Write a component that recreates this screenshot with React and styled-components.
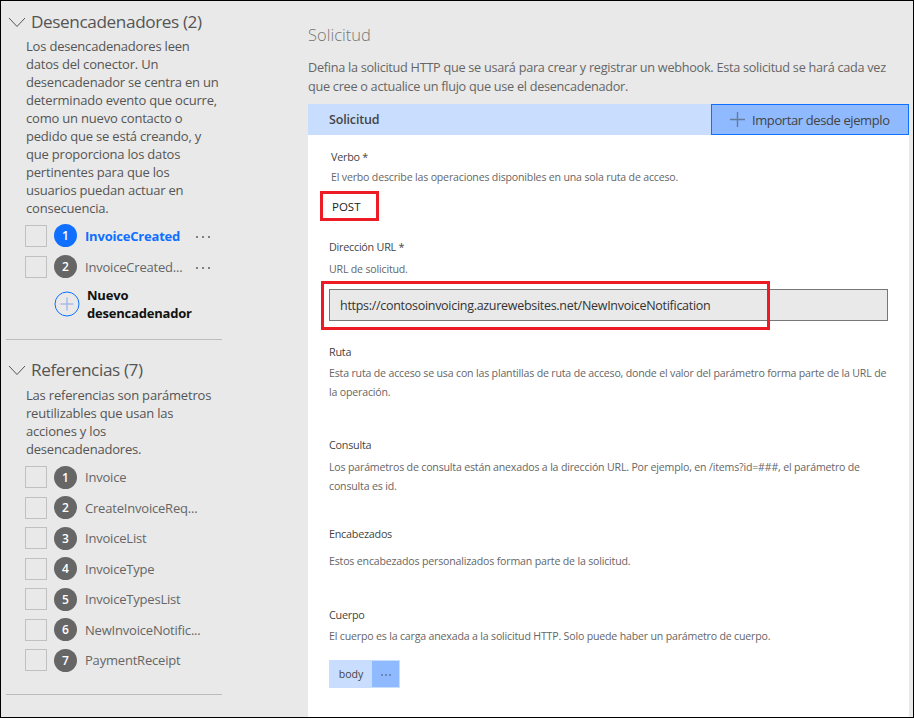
import React from 'react'
import styled, { createGlobalStyle } from 'styled-components'

const GlobalStyle = createGlobalStyle`
    html, body {
        margin: 0;
        padding: 0;
        background: #ffffff;
    }
    * {
        box-sizing: border-box;
    }
`

const Frame = styled.div`
    width: 914px;
    height: 718px;
    display: flex;
    overflow: hidden;
    background: #e9e9e9;
    border: 1px solid #000000;
    font-family: "Open Sans", "Noto Sans", sans-serif;
`

const Sidebar = styled.aside`
    width: 307px;
    flex: none;
    padding: 9px 0 0 5px;
`

const Section = styled.section`
    width: 216px;
    padding-bottom: ${({ $bottom }) => $bottom}px;
    margin-bottom: ${({ $after }) => $after}px;
    border-bottom: 1px solid #bdbdbd;
`

const SectionHead = styled.div`
    display: flex;
    align-items: center;
    gap: 5px;
    height: 24px;
    padding-left: 2px;
`

const SectionTitle = styled.h2`
    margin: 0;
    font-size: 17.2px;
    font-weight: 400;
    line-height: 24px;
    letter-spacing: -0.4px;
    color: #555555;
    white-space: nowrap;
`

const SectionText = styled.p`
    margin: ${({ $top }) => $top}px 0 ${({ $end }) => $end}px 20px;
    width: 195px;
    font-size: 13px;
    line-height: 18px;
    letter-spacing: -0.2px;
    color: #555555;
`

const Row = styled.div`
    display: flex;
    align-items: center;
    height: ${({ $height }) => $height}px;
    padding-left: 19px;
`

const Check = styled.span`
    width: 22px;
    height: 22px;
    flex: none;
    border: 1px solid #c0c0c0;
`

const Badge = styled.span`
    width: 23px;
    height: 23px;
    flex: none;
    margin-left: 7px;
    border-radius: 50%;
    display: flex;
    align-items: center;
    justify-content: center;
    background: ${({ $active }) => ($active ? '#0f6fff' : '#666666')};
    color: #ffffff;
    font-size: 12px;
    font-weight: 600;
`

const RowLabel = styled.span`
    width: 111px;
    flex: none;
    margin-left: 8px;
    font-size: 13px;
    font-weight: ${({ $active }) => ($active ? 700 : 400)};
    letter-spacing: -0.2px;
    color: ${({ $active }) => ($active ? '#0f6fff' : '#666666')};
    white-space: nowrap;
`

const Dots = styled.span`
    display: flex;
    gap: ${({ $gap }) => $gap}px;
    margin-top: 2px;
    i {
        width: 2px;
        height: 2px;
        background: ${({ $color }) => $color};
    }
`

const NewRow = styled.div`
    display: flex;
    align-items: center;
    margin-top: 4px;
    padding-left: 48px;
    gap: 7px;
`

const NewLabel = styled.span`
    font-size: 13px;
    font-weight: 700;
    line-height: 18px;
    letter-spacing: -0.2px;
    color: #111111;
    width: 120px;
`

const Main = styled.main`
    flex: 1;
    min-width: 0;
    display: flex;
    flex-direction: column;
    padding-right: 4px;
`

const PageTitle = styled.h1`
    margin: 22px 0 0 0;
    font-size: 16.5px;
    font-weight: 300;
    line-height: 24px;
    color: #777777;
`

const PageText = styled.p`
    margin: 11px 0 0 0;
    font-size: 12.7px;
    line-height: 19px;
    letter-spacing: -0.28px;
    color: #666666;
    width: 590px;
`

const Panel = styled.div`
    margin-top: 8px;
    flex: 1;
    background: #ffffff;
    display: flex;
    flex-direction: column;
`

const PanelHead = styled.div`
    height: 31px;
    flex: none;
    display: flex;
    align-items: center;
    justify-content: space-between;
    padding-left: 21px;
    background: #c9deff;
`

const PanelTitle = styled.span`
    font-size: 12.5px;
    font-weight: 600;
    letter-spacing: -0.15px;
    color: #444444;
`

const ImportButton = styled.button`
    width: 198px;
    height: 31px;
    display: flex;
    align-items: center;
    gap: 7px;
    padding: 0 0 0 18px;
    background: #8fbaff;
    border: 1px solid #0f6fff;
    font-family: inherit;
    font-size: 13px;
    font-weight: 500;
    letter-spacing: -0.4px;
    color: #444444;
    white-space: nowrap;
`

const PanelBody = styled.div`
    padding: 0 21px;
    display: flex;
    flex-direction: column;
`

const Field = styled.div`
    margin-top: ${({ $top }) => $top}px;
    padding-left: ${({ $indent }) => $indent || 0}px;
`

const Label = styled.div`
    font-size: 10.8px;
    line-height: 18px;
    letter-spacing: -0.25px;
    color: #444444;
`

const Hint = styled.div`
    margin-top: ${({ $gap }) => $gap}px;
    font-size: 10.6px;
    line-height: 18.5px;
    letter-spacing: -0.18px;
    color: #666666;
`

const Annotated = styled.div`
    position: relative;
    display: flow-root;
`

const RedBox = styled.span`
    position: absolute;
    left: ${({ $left }) => $left}px;
    top: ${({ $top }) => $top}px;
    width: ${({ $width }) => $width}px;
    height: ${({ $height }) => $height}px;
    border: 3px solid #ed1c24;
    pointer-events: none;
`

const VerbValue = styled.div`
    margin-top: 11px;
    padding-left: 1px;
    font-size: 11.5px;
    line-height: 18px;
    font-weight: 500;
    color: #222222;
`

const UrlInput = styled.div`
    margin-top: 11px;
    height: 32px;
    display: flex;
    align-items: center;
    padding-left: 10px;
    background: #e9e9e9;
    border: 1px solid #777777;
    font-size: 12.5px;
    letter-spacing: -0.29px;
    color: #333333;
`

const Chip = styled.div`
    display: flex;
    width: 71px;
    height: 28px;
    margin-top: 14.5px;
    background: #c9deff;
    border: 1px solid #c9deff;
`

const ChipName = styled.span`
    flex: 1;
    display: flex;
    align-items: center;
    justify-content: center;
    font-size: 10.6px;
    color: #444444;
`

const ChipMenu = styled.span`
    width: 27px;
    display: flex;
    align-items: center;
    justify-content: center;
    background: #8fbaff;
`

const Chevron = () => (
    <svg width="18" height="11" viewBox="0 0 18 11" fill="none" stroke="#555555" strokeWidth="1">
        <path d="M1 1l8 8.5L17 1" />
    </svg>
)

const PlusCircle = () => (
    <svg width="26" height="26" viewBox="0 0 26 26" fill="none">
        <circle cx="13" cy="13" r="12" stroke="#0f6fff" />
        <path d="M13 6.5v13M6.5 13h13" stroke="#8fa6e8" />
    </svg>
)

const PlusIcon = () => (
    <svg width="15" height="15" viewBox="0 0 15 15" fill="none" stroke="#667a99" strokeWidth="1.4">
        <path d="M7.5 0v15M0 7.5h15" />
    </svg>
)

const MoreDots = ({ color = '#808080', gap = 4 }) => (
    <Dots $color={color} $gap={gap}><i /><i /><i /></Dots>
)

const refs = ['Invoice', 'CreateInvoiceReq...', 'InvoiceList', 'InvoiceType', 'InvoiceTypesList', 'NewInvoiceNotific...', 'PaymentReceipt']

const App = () => (
    <Frame>
        <GlobalStyle />
        <Sidebar>
            <Section $bottom={17} $after={18}>
                <SectionHead><Chevron /><SectionTitle>Desencadenadores (2)</SectionTitle></SectionHead>
                <SectionText $top={3} $end={3}>
                    Los desencadenadores leen datos del conector. Un desencadenador se centra en un determinado evento que ocurre, como un nuevo contacto o pedido que se está creando, y que proporciona los datos pertinentes para que los usuarios puedan actuar en consecuencia.
                </SectionText>
                <Row $height={31}>
                    <Check /><Badge $active>1</Badge><RowLabel $active>InvoiceCreated</RowLabel><MoreDots />
                </Row>
                <Row $height={31}>
                    <Check /><Badge>2</Badge><RowLabel>InvoiceCreated...</RowLabel><MoreDots />
                </Row>
                <NewRow><PlusCircle /><NewLabel>Nuevo desencadenador</NewLabel></NewRow>
            </Section>
            <Section $bottom={18} $after={0}>
                <SectionHead><Chevron /><SectionTitle>Referencias (7)</SectionTitle></SectionHead>
                <SectionText $top={4} $end={4}>
                    Las referencias son parámetros reutilizables que usan las acciones y los desencadenadores.
                </SectionText>
                {refs.map((name, ind) => (
                    <Row key={name} $height={30.5}>
                        <Check /><Badge>{ind + 1}</Badge><RowLabel>{name}</RowLabel>
                    </Row>
                ))}
            </Section>
        </Sidebar>
        <Main>
            <PageTitle>Solicitud</PageTitle>
            <PageText>
                Defina la solicitud HTTP que se usará para crear y registrar un webhook. Esta solicitud se hará cada vez que cree o actualice un flujo que use el desencadenador.
            </PageText>
            <Panel>
                <PanelHead>
                    <PanelTitle>Solicitud</PanelTitle>
                    <ImportButton><PlusIcon />Importar desde ejemplo</ImportButton>
                </PanelHead>
                <PanelBody>
                    <Field $top={13} $indent={2}>
                        <Label>Verbo *</Label>
                        <Hint $gap={2}>El verbo describe las operaciones disponibles en una sola ruta de acceso.</Hint>
                        <Annotated>
                            <VerbValue>POST</VerbValue>
                            <RedBox $left={-11} $top={4.5} $width={59} $height={30} />
                        </Annotated>
                    </Field>
                    <Field $top={22}>
                        <Label>Dirección URL *</Label>
                        <Hint $gap={4}>URL de solicitud.</Hint>
                        <Annotated>
                            <UrlInput>https://contosoinvoicing.azurewebsites.net/NewInvoiceNotification</UrlInput>
                            <RedBox $left={-8} $top={3} $width={449} $height={49} />
                        </Annotated>
                    </Field>
                    <Field $top={22}>
                        <Label>Ruta</Label>
                        <Hint $gap={3}>Esta ruta de acceso se usa con las plantillas de ruta de acceso, donde el valor del parámetro forma parte de la URL de la operación.</Hint>
                    </Field>
                    <Field $top={35}>
                        <Label>Consulta</Label>
                        <Hint $gap={4}>Los parámetros de consulta están anexados a la dirección URL. Por ejemplo, en /items?id=###, el parámetro de consulta es id.</Hint>
                    </Field>
                    <Field $top={30}>
                        <Label>Encabezados</Label>
                        <Hint $gap={9}>Estos encabezados personalizados forman parte de la solicitud.</Hint>
                    </Field>
                    <Field $top={35.5}>
                        <Label>Cuerpo</Label>
                        <Hint $gap={3}>El cuerpo es la carga anexada a la solicitud HTTP. Solo puede haber un parámetro de cuerpo.</Hint>
                        <Chip>
                            <ChipName>body</ChipName>
                            <ChipMenu><MoreDots color="#6f88b5" gap={2} /></ChipMenu>
                        </Chip>
                    </Field>
                </PanelBody>
            </Panel>
        </Main>
    </Frame>
)

export default App
